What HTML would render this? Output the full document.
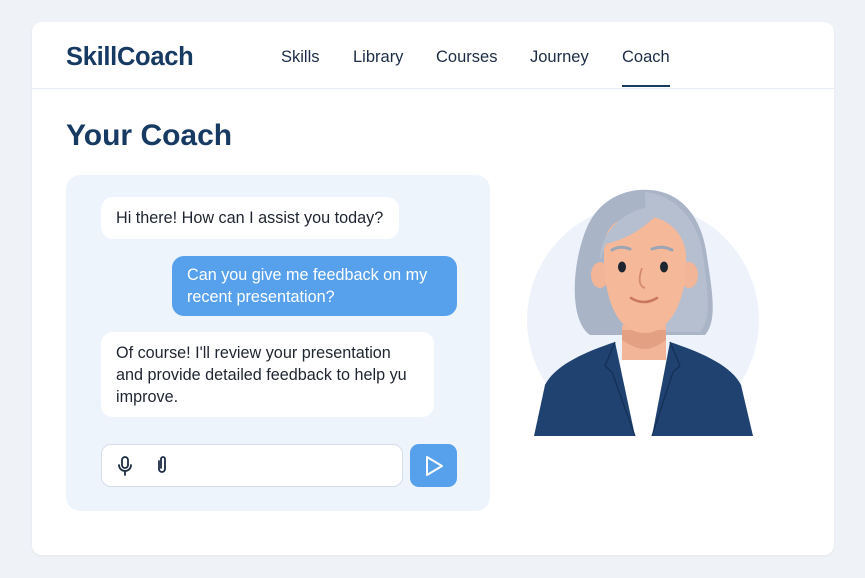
<!DOCTYPE html>
<html><head><style>
body{margin:0;width:865px;height:578px;background:#eff3f8;font-family:"Liberation Sans",sans-serif;position:relative;overflow:hidden}
.card{position:absolute;left:32px;top:22px;width:802px;height:533px;background:#fff;border-radius:10px;box-shadow:0 1px 3px rgba(0,0,0,.05)}
.hdr{position:absolute;left:0;top:0;width:802px;height:66px;border-bottom:1.5px solid #e6ecf4}
.abs{position:absolute;white-space:nowrap}
.logo{left:34px;top:21px;font-size:25.5px;font-weight:bold;color:#173a63;letter-spacing:-0.3px}
.nav{top:26px;font-size:16.5px;color:#1c2c45;font-weight:500}
.ul{left:590px;top:63px;width:48px;height:2px;background:#173a63}
h1{position:absolute;left:34px;top:97px;margin:0;font-size:30px;color:#173a63;font-weight:bold}
.panel{position:absolute;left:34px;top:153px;width:424px;height:336px;background:#eef4fc;border-radius:14px}
.b{position:absolute;background:#fff;border-radius:12px;font-size:16.2px;color:#1f2530;line-height:22px;padding:0 15px;box-sizing:border-box;white-space:nowrap}
</style></head><body>
<div class="card">
<div class="hdr"></div>
<div class="abs logo">SkillCoach</div>
<div class="abs nav" style="left:249px">Skills</div>
<div class="abs nav" style="left:321px">Library</div>
<div class="abs nav" style="left:404px">Courses</div>
<div class="abs nav" style="left:498px">Journey</div>
<div class="abs nav" style="left:590px">Coach</div>
<div class="abs ul"></div>
<h1>Your Coach</h1>
<div class="panel"></div>
<div class="b" style="left:69px;top:175px;width:298px;height:42px;padding-top:10px">Hi there! How can I assist you today?</div>
<div class="b" style="left:140px;top:234px;width:285px;height:60px;padding-top:8px;background:#57a0ec;color:#fff">Can you give me feedback on my<br>recent presentation?</div>
<div class="b" style="left:69px;top:310px;width:333px;height:85px;padding-top:10px">Of course! I'll review your presentation<br>and provide detailed feedback to help yu<br>improve.</div>
<div class="abs" style="left:69px;top:422px;width:302px;height:43px;background:#fff;border:1px solid #d6dde8;border-radius:10px;box-sizing:border-box"></div>
<svg class="abs" style="left:84px;top:434px" width="18" height="20" viewBox="0 0 18 20" fill="none" stroke="#1c2c45" stroke-width="1.8" stroke-linecap="round"><rect x="6" y="1" width="6" height="11" rx="3"/><path d="M3 9a6 6 0 0 0 12 0M9 15v4"/></svg>
<svg class="abs" style="left:123px;top:433px" width="14" height="20" viewBox="0 0 14 20" fill="none" stroke="#1c2c45" stroke-width="1.8" stroke-linecap="round"><path d="M4 6v8a3 3 0 0 0 6 0V4a2 2 0 0 0-4 0v9"/></svg>
<div class="abs" style="left:378px;top:422px;width:47px;height:43px;background:#57a0ec;border-radius:9px"></div>
<svg class="abs" style="left:390px;top:432px" width="24" height="24" viewBox="0 0 24 24" fill="none" stroke="#fff" stroke-width="2" stroke-linejoin="round"><path d="M5 3l15 9-15 9z"/></svg>
</div>
<svg class="abs" style="left:0;top:0" width="865" height="578">
<circle cx="643" cy="320" r="116" fill="#eef3fb"/>
<path d="M590 335 C568 320 572 260 588 225 C602 196 630 188 650 190 C680 192 700 215 706 250 C712 290 718 320 705 335 Z" fill="#a9b4c6"/>
<path d="M645 192 C675 195 698 220 703 255 C708 295 712 318 700 332 L650 332 Z" fill="#b5bfcf"/>
<rect x="622" y="325" width="44" height="40" fill="#f2b597"/>
<path d="M622 340 C640 352 650 352 666 340 L666 330 L622 330Z" fill="#e3a082"/>
<ellipse cx="600" cy="275" rx="9" ry="13" fill="#f2b597"/>
<ellipse cx="689" cy="275" rx="9" ry="13" fill="#f2b597"/>
<path d="M604 250 C604 225 620 215 640 218 C660 212 685 230 686 255 C688 300 670 333 645 333 C620 333 603 305 604 250Z" fill="#f5b898"/>
<path d="M600 260 C600 228 630 205 665 205 C650 225 630 238 606 244Z" fill="#b5bfcf"/>
<path d="M612 250 Q620 245 630 249 M652 249 Q662 245 672 250" stroke="#9aa5b6" stroke-width="3" fill="none" stroke-linecap="round"/>
<ellipse cx="622" cy="267" rx="4" ry="5.5" fill="#1f2530"/>
<ellipse cx="664" cy="267" rx="4" ry="5.5" fill="#1f2530"/>
<path d="M642 268 Q636 285 645 288" stroke="#d38a6e" stroke-width="1.8" fill="none"/>
<path d="M631 298 Q644 306 657 298" stroke="#c9785e" stroke-width="2.5" fill="none" stroke-linecap="round"/>
<path d="M620 360 L668 360 L660 436 L628 436 Z" fill="#fff"/>
<path d="M545 385 C555 365 585 352 615 342 L635 436 L534 436 Z" fill="#1f4270"/>
<path d="M741 385 C731 365 700 352 670 342 L652 436 L753 436 Z" fill="#1f4270"/>
<path d="M615 342 L605 366 L612 372 L635 436 M670 342 L680 366 L673 372 L652 436" stroke="#142f55" stroke-width="1.2" fill="none"/>
</svg>
</body></html>
